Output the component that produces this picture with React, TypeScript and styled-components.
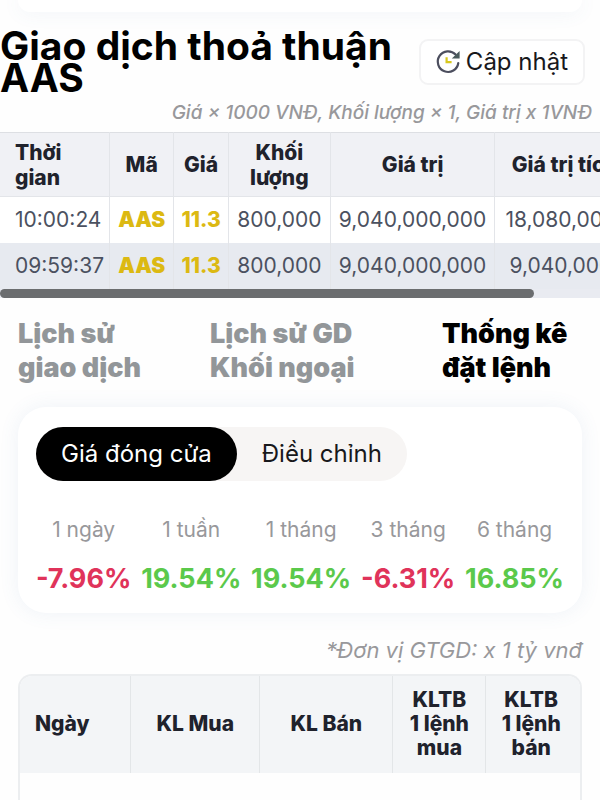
import React, { useState } from 'react';
import styled, { createGlobalStyle, css } from 'styled-components';

const GlobalStyle = createGlobalStyle`
  *, *::before, *::after { box-sizing: border-box; }
  body {
    margin: 0;
    background: #fefefe;
    color: #000;
    font-family: Inter, "Liberation Sans", sans-serif;
    overflow-x: hidden;
  }
  button { font: inherit; color: inherit; border: 0; background: none; padding: 0; cursor: pointer; }
`;

const Page = styled.main`
  display: flex;
  flex-direction: column;
  height: 100vh;
  overflow: hidden;
`;

const cardShadow = css`
  box-shadow: 0 0 20px rgba(80, 120, 180, 0.09);
`;

const PreviousCard = styled.div`
  flex: none;
  height: 12px;
  margin: 0 18px;
  border-radius: 0 0 28px 28px;
  background: #fff;
  ${cardShadow}
`;

const Header = styled.header`
  flex: none;
  display: flex;
  justify-content: space-between;
  align-items: center;
  padding: 18px 15px 0 0;
`;

const Title = styled.h1`
  margin: 0;
  font-size: 39px;
  line-height: 32px;
  font-weight: 700;
`;

const RefreshButton = styled.button`
  && {
    flex: none;
    display: flex;
    align-items: center;
    gap: 5px;
    height: 46px;
    padding: 0 15px 0 14px;
    border: 2px solid #f3f3f4;
    border-radius: 9px;
    background: #fff;
    font-size: 24px;
    line-height: 32px;
    color: #18181b;
  }
`;

const Note = styled.p<{ $inset?: boolean }>`
  flex: none;
  margin: 0;
  padding: ${(p) => (p.$inset ? '22px 18px 9px' : '4px 8px')};
  text-align: right;
  font-size: ${(p) => (p.$inset ? 22 : 19)}px;
  line-height: 30px;
  font-style: italic;
  font-weight: ${(p) => (p.$inset ? 400 : 500)};
  color: #98989b;
`;

const DealScroller = styled.div`
  flex: none;
  overflow-x: auto;
  scrollbar-width: none;
  background: #e9ebf1;
`;

const DealTable = styled.table`
  width: 112%;
  table-layout: fixed;
  border-collapse: collapse;
  font-size: 21px;
  line-height: 25px;

  th, td {
    padding: 0;
    text-align: center;
    white-space: nowrap;
    border-right: 1px solid #e3e5e9;
  }
  th:first-child, td:first-child { padding-left: 15px; text-align: left; }
  th {
    height: 64px;
    background: #f0f1f5;
    border-top: 1px solid #dddfe3;
    border-bottom: 1px solid #e3e5e9;
    font-weight: 800;
    color: #20222c;
  }
  td { height: 46px; color: #4b5160; }
  tbody tr { background: #fff; }
  tbody tr:nth-child(even) { background: #e7eaf0; }
`;

const Col = styled.col<{ $share: number }>`
  width: ${(p) => p.$share}%;
`;

const Gold = styled.span<{ $heavy?: boolean }>`
  font-weight: ${(p) => (p.$heavy ? 900 : 800)};
  color: #dcb912;
`;

const ScrollTrack = styled.div`
  flex: none;
  height: 9px;
  background: #e9ebf1;
`;

const ScrollThumb = styled.div`
  width: 89%;
  height: 9px;
  border-radius: 5px;
  background: #6b6d6f;
`;

const Tabs = styled.div`
  flex: none;
  display: grid;
  grid-template-columns: 192fr 232fr 158fr;
  padding: 19px 0 0 18px;
`;

const Tab = styled.button<{ $active: boolean }>`
  && {
    text-align: left;
    font-size: 27px;
    line-height: 34px;
    font-weight: 900;
    color: ${(p) => (p.$active ? '#000' : '#929699')};
  }
`;

const StatsCard = styled.section`
  flex: none;
  margin: 22px 18px 0;
  padding: 20px 18px 14px;
  border-radius: 28px;
  background: #fff;
  ${cardShadow}
`;

const Segments = styled.div`
  display: inline-flex;
  vertical-align: top;
  border-radius: 27px;
  background: #f7f5f4;
`;

const Segment = styled.button<{ $active: boolean }>`
  && {
    height: 54px;
    padding: 0 25px;
    border-radius: 28px;
    font-size: 24px;
    background: ${(p) => (p.$active ? '#000' : 'transparent')};
    color: ${(p) => (p.$active ? '#fff' : '#18181b')};
  }
`;

const Changes = styled.dl`
  display: flex;
  justify-content: space-between;
  margin: 30px 0 0;
`;

const Change = styled.div`
  display: flex;
  flex-direction: column;
  align-items: center;
`;

const Period = styled.dt`
  font-size: 21px;
  line-height: 38px;
  color: #98989b;
`;

const Percent = styled.dd<{ $down: boolean }>`
  margin: 10px 0 0;
  font-size: 27px;
  line-height: 40px;
  font-weight: 700;
  color: ${(p) => (p.$down ? '#e0335a' : '#5bc94b')};
`;

const OrderFrame = styled.div`
  flex: 1;
  min-height: 120px;
  margin: 0 18px;
  border: 2px solid #eceef0;
  border-bottom: 0;
  border-radius: 14px 14px 0 0;
  overflow: hidden;
`;

const OrderTable = styled.table`
  width: 100%;
  table-layout: fixed;
  border-collapse: collapse;

  th {
    height: 97px;
    padding: 0;
    background: #f3f5f7;
    border-right: 1px solid #e3e6e8;
    font-size: 21px;
    line-height: 24px;
    font-weight: 800;
    color: #20222c;
  }
  th:first-child { padding-left: 15px; text-align: left; }
  th:last-child { padding-right: 4px; border-right: 0; }
`;

const ClockRefresh = () => (
  <svg width="26" height="26" viewBox="0 0 26 26" fill="none" aria-hidden="true">
    <path d="M20.6 5.6A10.3 10.3 0 1 0 23.3 14" stroke="#4c4e5e" strokeWidth="2.2" strokeLinecap="round" />
    <path d="M24.6 2v7.6h-7.8z" fill="#4a5a5c" />
    <path d="M11.6 8.2v5h5" stroke="#d8c81e" strokeWidth="2.2" />
  </svg>
);

const Lines = ({ of }: { of: string[] }) => (
  <>
    {of.map((line, i) => (
      <React.Fragment key={line}>
        {i > 0 && <br />}
        {line}
      </React.Fragment>
    ))}
  </>
);

const dealColumns = [
  { label: ['Thời', 'gian'], share: 16.3 },
  { label: ['Mã'], share: 9.6 },
  { label: ['Giá'], share: 8.1 },
  { label: ['Khối', 'lượng'], share: 15.2 },
  { label: ['Giá trị'], share: 24.5 },
  { label: ['Giá trị tích lũy'], share: 26.3 },
];

const deals = [
  { time: '10:00:24', code: 'AAS', price: '11.3', volume: '800,000', value: '9,040,000,000', total: '18,080,000,000' },
  { time: '09:59:37', code: 'AAS', price: '11.3', volume: '800,000', value: '9,040,000,000', total: '9,040,000,000' },
];

const tabs = [
  ['Lịch sử', 'giao dịch'],
  ['Lịch sử GD', 'Khối ngoại'],
  ['Thống kê', 'đặt lệnh'],
];

const segments = ['Giá đóng cửa', 'Điều chỉnh'];

const changes = [
  { period: '1 ngày', value: '-7.96%' },
  { period: '1 tuần', value: '19.54%' },
  { period: '1 tháng', value: '19.54%' },
  { period: '3 tháng', value: '-6.31%' },
  { period: '6 tháng', value: '16.85%' },
];

const orderColumns = [
  { label: ['Ngày'], share: 19.8 },
  { label: ['KL Mua'], share: 23 },
  { label: ['KL Bán'], share: 23.8 },
  { label: ['KLTB', '1 lệnh', 'mua'], share: 16.6 },
  { label: ['KLTB', '1 lệnh', 'bán'], share: 16.8 },
];

export default function App() {
  const [tab, setTab] = useState(2);
  const [segment, setSegment] = useState(0);

  return (
    <>
      <GlobalStyle />
      <Page>
        <PreviousCard />
        <Header>
          <Title>Giao dịch thoả thuận AAS</Title>
          <RefreshButton type="button">
            <ClockRefresh />
            Cập nhật
          </RefreshButton>
        </Header>
        <Note>Giá × 1000 VNĐ, Khối lượng × 1, Giá trị x 1VNĐ</Note>

        <DealScroller>
          <DealTable>
            <colgroup>
              {dealColumns.map((c) => <Col key={c.share} $share={c.share} />)}
            </colgroup>
            <thead>
              <tr>
                {dealColumns.map((c) => <th key={c.share} scope="col"><Lines of={c.label} /></th>)}
              </tr>
            </thead>
            <tbody>
              {deals.map((d) => (
                <tr key={d.time}>
                  <td>{d.time}</td>
                  <td><Gold $heavy>{d.code}</Gold></td>
                  <td><Gold>{d.price}</Gold></td>
                  <td>{d.volume}</td>
                  <td>{d.value}</td>
                  <td>{d.total}</td>
                </tr>
              ))}
            </tbody>
          </DealTable>
        </DealScroller>
        <ScrollTrack><ScrollThumb /></ScrollTrack>

        <Tabs role="tablist">
          {tabs.map((label, i) => (
            <Tab key={label[1]} type="button" role="tab" aria-selected={i === tab} $active={i === tab} onClick={() => setTab(i)}>
              <Lines of={label} />
            </Tab>
          ))}
        </Tabs>

        <StatsCard>
          <Segments>
            {segments.map((label, i) => (
              <Segment key={label} type="button" aria-pressed={i === segment} $active={i === segment} onClick={() => setSegment(i)}>
                {label}
              </Segment>
            ))}
          </Segments>
          <Changes>
            {changes.map((c) => (
              <Change key={c.period}>
                <Period>{c.period}</Period>
                <Percent $down={c.value.startsWith('-')}>{c.value}</Percent>
              </Change>
            ))}
          </Changes>
        </StatsCard>

        <Note $inset>*Đơn vị GTGD: x 1 tỷ vnđ</Note>

        <OrderFrame>
          <OrderTable>
            <colgroup>
              {orderColumns.map((c) => <Col key={c.share} $share={c.share} />)}
            </colgroup>
            <thead>
              <tr>
                {orderColumns.map((c) => <th key={c.label.join()} scope="col"><Lines of={c.label} /></th>)}
              </tr>
            </thead>
          </OrderTable>
        </OrderFrame>
      </Page>
    </>
  );
}
